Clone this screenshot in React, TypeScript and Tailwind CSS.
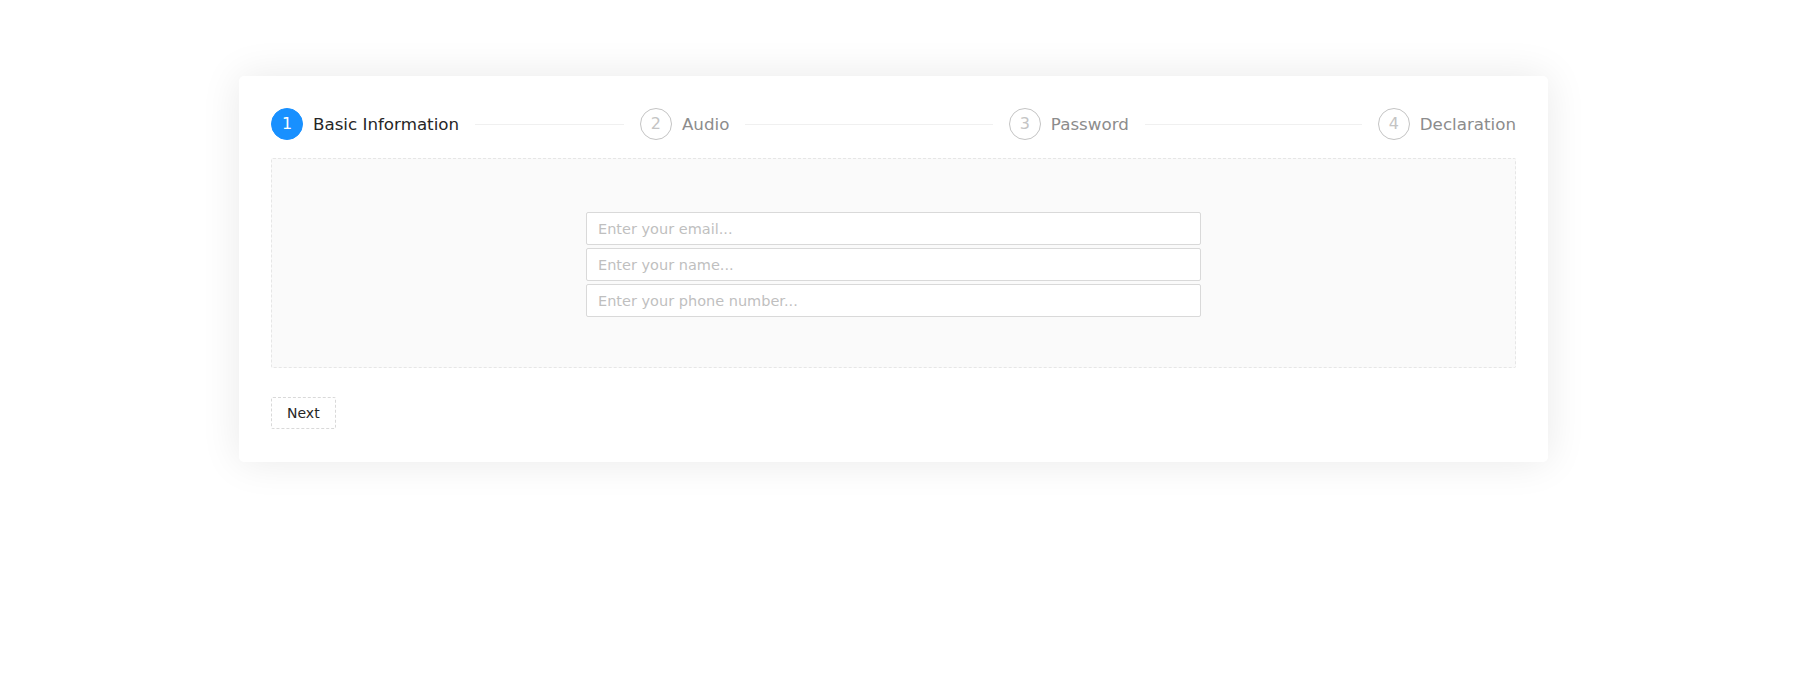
import clsx from 'clsx';

const steps = ['Basic Information', 'Audio', 'Password', 'Declaration'];
const current = 0;

const fields = ['Enter your email...', 'Enter your name...', 'Enter your phone number...'];

function StepItem({ index, title }: { index: number; title: string }) {
  const last = index === steps.length - 1;
  const active = index === current;
  return (
    <div className={clsx('flex h-8 items-center', last ? 'flex-none' : 'flex-1', index > 0 && 'pl-4')}>
      <span
        className={clsx(
          'flex h-8 w-8 shrink-0 items-center justify-center rounded-full border text-[16px]',
          active ? 'border-[#1890ff] bg-[#1890ff] text-white' : 'border-[#c4c4c4] text-[#c4c4c4]',
        )}
      >
        {index + 1}
      </span>
      <span
        className={clsx(
          'ml-[10px] whitespace-nowrap text-[16.7px] leading-8',
          !last && 'pr-4',
          active ? 'text-[#262626]' : 'text-[#8c8c8c]',
        )}
      >
        {title}
      </span>
      {!last && <span className="h-px flex-1 bg-[#f0f0f0]" />}
    </div>
  );
}

export default function App() {
  return (
    <div className="min-h-screen bg-white pt-[76px] font-['DejaVu_Sans',sans-serif]">
      <div className="ml-[239px] w-[1309px] rounded-[5px] bg-white px-8 pt-8 pb-[33px] shadow-[0_0_40px_rgba(0,0,0,0.09)]">
        {/* steps header */}
        <div className="flex items-center">
          {steps.map((title, i) => (
            <StepItem key={title} index={i} title={title} />
          ))}
        </div>

        {/* step content */}
        <div className="mt-[18px] flex h-[210px] flex-col items-center gap-[3px] rounded-[2px] border border-dashed border-[#e6e6e6] bg-[#fafafa] pt-[53px]">
          {fields.map((ph) => (
            <input
              key={ph}
              placeholder={ph}
              className="h-[33px] w-[615px] rounded-[2px] border border-[#d9d9d9] bg-white px-[11px] text-[14.5px] text-[#262626] outline-none placeholder:text-[#bfbfbf]"
            />
          ))}
        </div>

        <button className="mt-[29px] h-8 rounded-[2px] border border-dashed border-[#d9d9d9] bg-white px-[15px] text-[14px] text-[#262626]">
          Next
        </button>
      </div>
    </div>
  );
}
